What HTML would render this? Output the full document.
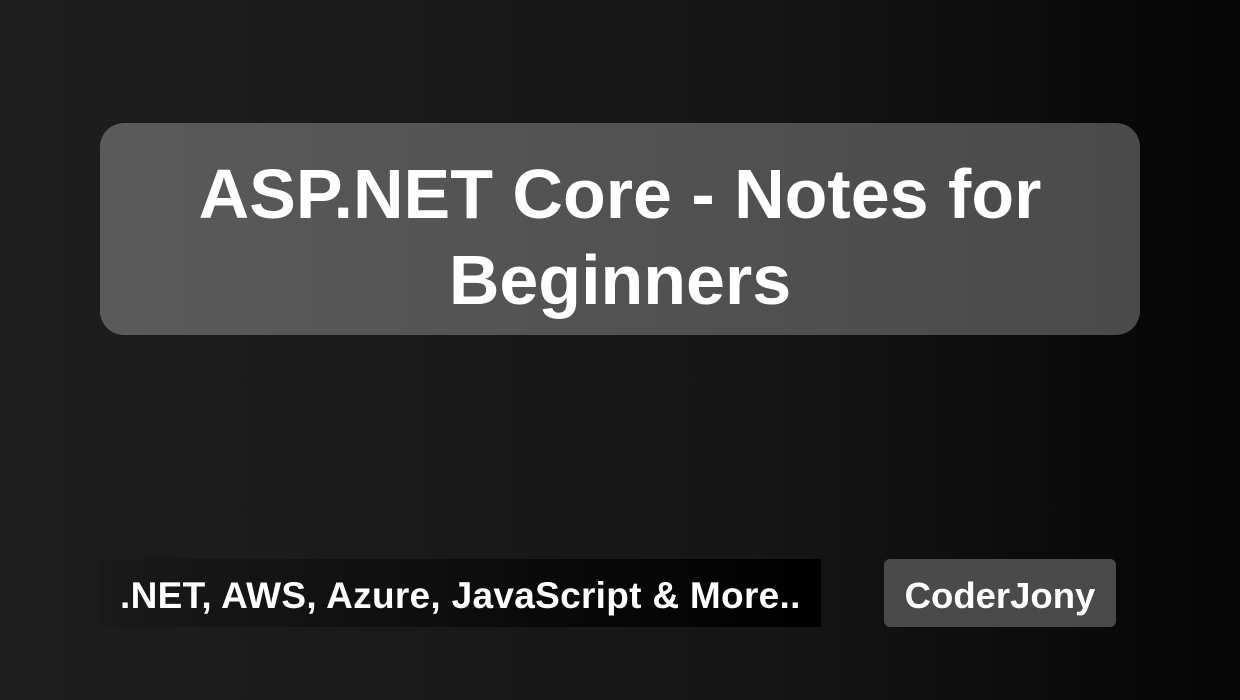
<!DOCTYPE html>
<html><head><meta charset="utf-8"><style>
html,body{margin:0;padding:0}
body{width:1240px;height:700px;overflow:hidden;position:relative;background:linear-gradient(90deg,#1e1e1e 0%,#161616 60%,#050505 100%);font-family:"Liberation Sans",sans-serif;color:#fff}
.box{position:absolute;left:100px;top:123px;width:1040px;height:212px;border-radius:24px;background:linear-gradient(90deg,#5a5a5a,#4a4a4a);display:flex;align-items:center;justify-content:center;text-align:center;font-weight:bold;font-size:70px;line-height:86px;padding-top:16px;box-sizing:border-box}
.tag{position:absolute;left:100px;top:559px;width:721px;height:68px;background:linear-gradient(90deg,#1a1a1a,#000);font-size:37px;letter-spacing:0.3px;font-weight:bold;display:flex;align-items:center;padding-left:20px;box-sizing:border-box;padding-top:5px;white-space:nowrap}
.name{position:absolute;left:884px;top:559px;width:232px;height:68px;background:#4a4a4a;border-radius:6px;font-size:36.5px;font-weight:bold;display:flex;align-items:center;justify-content:center;padding-top:5px;box-sizing:border-box}
</style></head><body>
<div class="box">ASP.NET Core - Notes for<br>Beginners</div>
<div class="tag">.NET, AWS, Azure, JavaScript &amp; More..</div>
<div class="name">CoderJony</div>
</body></html>
